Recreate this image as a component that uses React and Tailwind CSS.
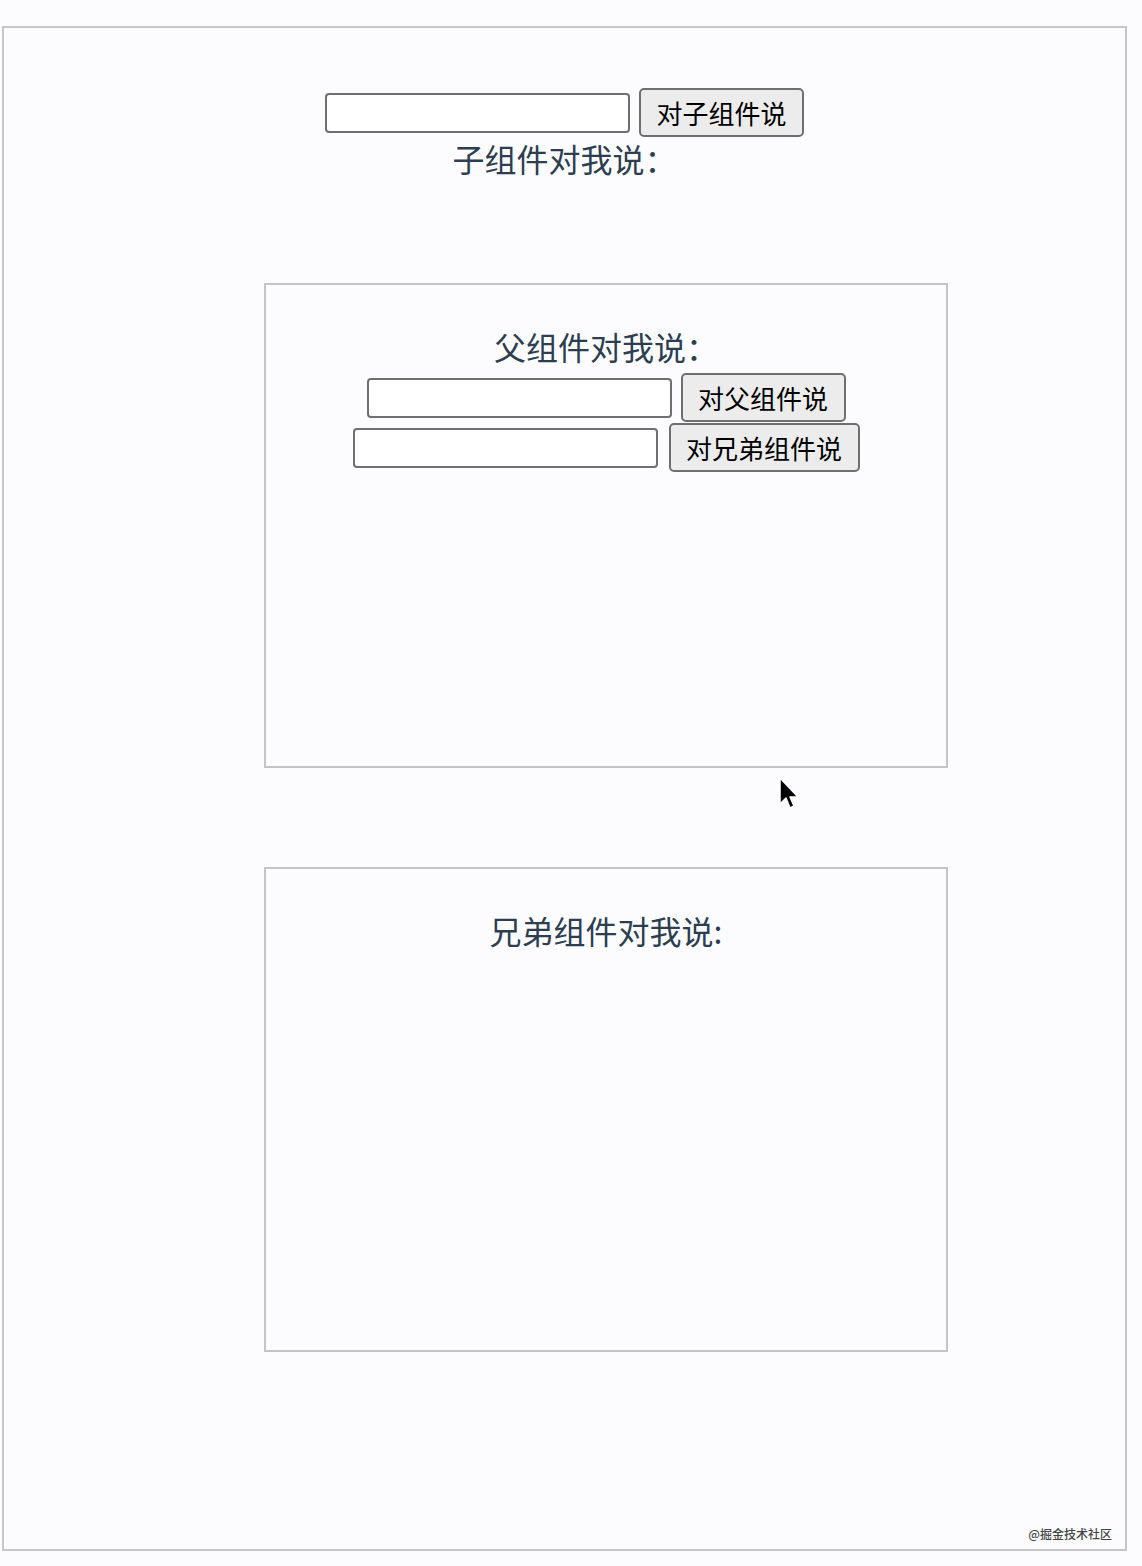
import React from "react";

const cjk = { fontFamily: '"Noto Sans CJK SC", "Noto Sans", sans-serif' };

function Field({ w = "w-[305px]" }) {
  return (
    <input
      type="text"
      className={`${w} h-[40px] rounded-[4px] border-2 border-[#6f6f6f] bg-white outline-none`}
    />
  );
}

function Btn({ children, w }) {
  return (
    <button
      className={`${w} h-[49px] rounded-[5px] border-2 border-[#6f6f6f] bg-[#ececec] text-[26px] leading-none text-black`}
      style={cjk}
    >
      {children}
    </button>
  );
}

export default function App() {
  return (
    <div className="relative w-[1142px] h-[1566px] bg-[#fcfcfe] pt-[26px] pl-[2px]" style={cjk}>
      <div className="relative w-[1125px] h-[1525px] border-2 border-[#c6c6c6] text-center text-[#2c3e50]">
        <div className="pt-[60px] flex justify-center items-center gap-[9px]">
          <Field />
          <Btn w="w-[165px]">对子组件说</Btn>
        </div>
        <div className="text-[32px] leading-[37px] mt-[3px]">子组件对我说：</div>

        <div className="mt-[106px] ml-[260px] w-[684px] h-[485px] border-2 border-[#c4c4c4] pt-[43px]">
          <div className="text-[32px] leading-[37px]">父组件对我说：</div>
          <div className="mt-[8px] flex justify-center items-center gap-[9px]">
            <Field />
            <Btn w="w-[165px]">对父组件说</Btn>
          </div>
          <div className="mt-[1px] flex justify-center items-center gap-[11px]">
            <Field />
            <Btn w="w-[191px]">对兄弟组件说</Btn>
          </div>
        </div>

        <div className="mt-[99px] ml-[260px] w-[684px] h-[485px] border-2 border-[#c4c4c4] pt-[43px]">
          <div className="text-[32px] leading-[37px]">兄弟组件对我说:</div>
        </div>

        <div className="absolute right-[13px] bottom-[9px] text-[12px] leading-none text-[#444] font-medium">
          @掘金技术社区
        </div>
      </div>

      <svg
        className="absolute left-[778px] top-[776px]"
        width="24"
        height="36"
        viewBox="0 0 24 36"
      >
        <path
          d="M2 2 L2 28 L8 22 L12 32 L16 30 L12 21 L20 21 Z"
          fill="#000"
          stroke="#fff"
          strokeWidth="1.5"
          strokeLinejoin="round"
        />
      </svg>
    </div>
  );
}
